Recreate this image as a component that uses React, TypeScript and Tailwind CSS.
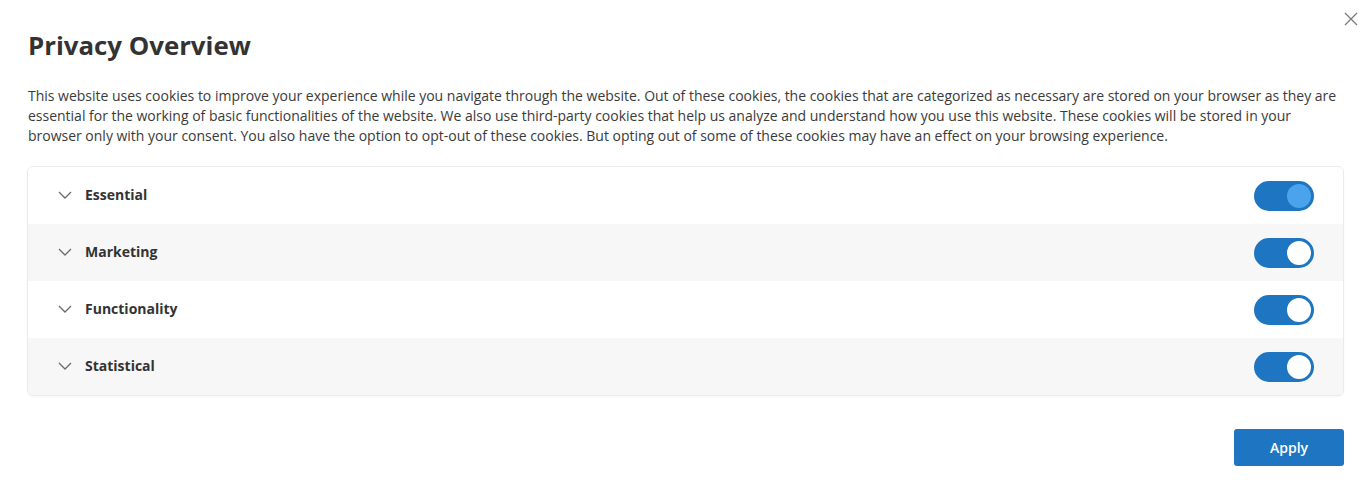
import React from "react";

const rows = [
  { label: "Essential", active: true, bg: "bg-white" },
  { label: "Marketing", active: false, bg: "bg-[#f7f7f7]" },
  { label: "Functionality", active: false, bg: "bg-white" },
  { label: "Statistical", active: false, bg: "bg-[#f7f7f7]" },
];

function Chevron() {
  return (
    <svg width="14" height="8" viewBox="0 0 14 8" fill="none" className="shrink-0 -mt-[2px]">
      <path d="M1 1l6 6 6-6" stroke="#6b6b6b" strokeWidth="1.3" />
    </svg>
  );
}

function Toggle({ active }: { active: boolean }) {
  return (
    <div className="w-[60px] h-[30px] rounded-full bg-[#1e76c2] flex items-center justify-end p-[1px]">
      <div
        className={`w-[28px] h-[28px] rounded-full border-2 border-[#1e76c2] ${
          active ? "bg-[#4ba3ec]" : "bg-white"
        }`}
      />
    </div>
  );
}

export default function App() {
  return (
    <div
      className="relative w-[1369px] h-[494px] bg-white text-[#333333]"
      style={{ fontFamily: '"Open Sans", sans-serif' }}
    >
      <button className="absolute right-[11px] top-[12px] w-[14px] h-[14px]">
        <svg width="14" height="14" viewBox="0 0 14 14" fill="none">
          <path d="M1 1l12 12M13 1L1 13" stroke="#7a7a7a" strokeWidth="1.3" />
        </svg>
      </button>
      <div className="pl-[27px] pr-[25px] pt-[27px]">
        <h2 className="pl-[1px] text-[25.8px] leading-[36px] font-bold text-[#333333]">
          Privacy Overview
        </h2>
        <p className="pl-[1px] mt-[23px] text-[14px] leading-[20px] tracking-[-0.01px] text-[#3a3a3a]">
          This website uses cookies to improve your experience while you navigate through the website. Out of these cookies, the cookies that are categorized as necessary are stored on your browser as they are essential for the working of basic functionalities of the website. We also use third-party cookies that help us analyze and understand how you use this website. These cookies will be stored in your browser only with your consent. You also have the option to opt-out of these cookies. But opting out of some of these cookies may have an effect on your browsing experience.
        </p>
        <div className="mt-[20px] border border-[#ebebeb] rounded-[6px] overflow-hidden shadow-[0_1px_2px_rgba(0,0,0,0.04)]">
          {rows.map((r) => (
            <div
              key={r.label}
              className={`${r.bg} h-[57px] flex items-center pl-[30px] pr-[29px]`}
            >
              <Chevron />
              <span className="ml-[13px] -mt-[2px] text-[14px] font-bold text-[#333333]">
                {r.label}
              </span>
              <div className="ml-auto">
                <Toggle active={r.active} />
              </div>
            </div>
          ))}
        </div>
        <div className="flex justify-end mt-[33px]">
          <button className="w-[110px] h-[37px] rounded-[3px] bg-[#1e76c2] text-white text-[14px] font-semibold">
            Apply
          </button>
        </div>
      </div>
    </div>
  );
}
